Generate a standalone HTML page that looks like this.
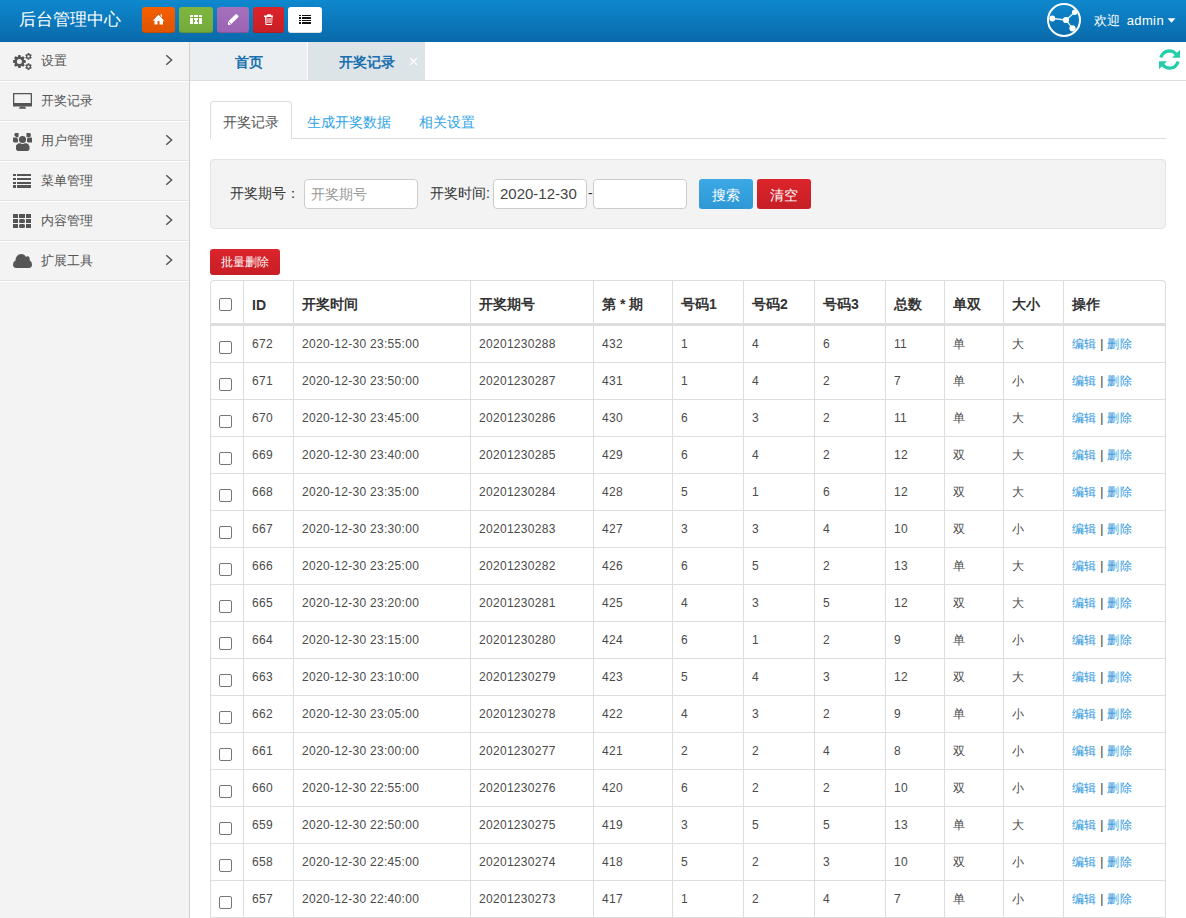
<!DOCTYPE html>
<html><head><meta charset="utf-8">
<style>
*{margin:0;padding:0;box-sizing:border-box}
html,body{width:1186px;height:918px;overflow:hidden;background:#fff;font-family:"Liberation Sans",sans-serif;color:#333}
.abs{position:absolute}
#hdr{left:0;top:0;width:1186px;height:42px;background:linear-gradient(#0e88ce,#0969aa)}
#title{left:19px;top:8px;color:#fff;font-size:17px;line-height:24px;white-space:nowrap}
.hb{top:7px;height:26px;border-radius:3px;box-shadow:inset 0 -1px 0 rgba(0,0,0,.12)}
.hb svg{position:absolute;left:0;top:0}
#side{left:0;top:42px;width:190px;height:876px;background:#f3f3f3;border-right:1px solid #cfcfcf}
.si{position:absolute;left:0;width:189px;height:40px;border-bottom:1px solid #e2e2e2;box-shadow:0 1px 0 #fff}
.si .t{position:absolute;left:41px;top:12px;font-size:13px;line-height:16px;color:#555;white-space:nowrap}
.si .chev{position:absolute;left:164px;top:13px}
.si svg.ic{position:absolute;left:13px}
#tabbar{left:190px;top:42px;width:996px;height:39px;border-bottom:1px solid #dedede;background:#fff}
.tb1{position:absolute;top:0;height:38px;font-size:14px;font-weight:bold;color:#1a6fae;line-height:40px;text-align:center}
#subtabs{left:210px;top:101px;width:956px;height:38px;border-bottom:1px solid #ddd}
.st{position:absolute;top:13px;font-size:14px;line-height:16px;color:#2fa4e7;white-space:nowrap}
#stact{left:0;top:0;width:82px;height:38px;border:1px solid #ddd;border-bottom:none;border-radius:4px 4px 0 0;background:#fff}
#search{left:210px;top:159px;width:956px;height:70px;background:#f3f3f3;border:1px solid #e3e3e3;border-radius:4px}
.lbl{position:absolute;font-size:14px;line-height:16px;color:#333;white-space:nowrap}
.inp{position:absolute;top:179px;height:30px;background:#fff;border:1px solid #ccc;border-radius:4px}
.btn{position:absolute;top:179px;height:30px;border-radius:3px;color:#fff;font-size:14px;line-height:32px;text-align:center}
#tbl{left:210px;top:280px;width:956px;border:1px solid #ddd;border-bottom:none;border-radius:4px 4px 0 0;overflow:hidden}
.tr{display:flex}
.td{border-right:1px solid #ddd;border-bottom:1px solid #ddd;padding-left:8px;white-space:nowrap;display:flex;align-items:center;font-size:12px;letter-spacing:0.3px;color:#4a4a4a;flex:none}
.td.l{border-right:none}
.th .td{border-bottom:3px solid #ddd;font-size:14px;letter-spacing:0;font-weight:bold;color:#333;padding-top:6px}
.td.c0{padding-left:0;justify-content:center}
.cb{display:inline-block;width:13px;height:13px;border:1px solid #767676;border-radius:2px;background:#fff;margin-top:7px;margin-left:-3px}
.th .cb{margin-top:-2px}
.td a{color:#1f96e0}
.td .sep{color:#333}
</style></head>
<body>
<div id="hdr" class="abs"></div>
<div id="title" class="abs">后台管理中心</div>
<div class="abs hb" style="left:142px;width:33px;background:linear-gradient(#f55f00,#e05300)"></div>
<div class="abs hb" style="left:179px;width:34px;background:linear-gradient(#7fb640,#74a93a)"></div>
<div class="abs hb" style="left:217px;width:32px;background:linear-gradient(#a571bd,#9a63b3)"></div>
<div class="abs hb" style="left:253px;width:31px;background:linear-gradient(#dc232a,#c81f26)"></div>
<div class="abs hb" style="left:288px;width:34px;background:#fff"></div>


<svg class="abs" style="left:0;top:0" width="1186" height="42" viewBox="0 0 1186 42">
 <!-- home -->
 <path fill="#fff" d="M152.5,20.5 L158.5,14.2 L160.5,16.2 L160.5,14.5 L162,14.5 L162,17.8 L164.5,20.5 L163,20.5 L163,24.5 L159.5,24.5 L159.5,21 L157.5,21 L157.5,24.5 L154.5,24.5 L154.5,20.5 Z"/>
 <path fill="none" stroke="#c44600" stroke-width="0.8" d="M153,19.8 L158.5,14.2 L164,19.8"/>
 <!-- columns -->
 <g fill="#fff"><rect x="190" y="15" width="3" height="2"/><rect x="194" y="15" width="4" height="2"/><rect x="199" y="15" width="3" height="2"/>
 <rect x="190" y="18" width="3" height="6"/><rect x="199" y="18" width="3" height="6"/>
 <path d="M194,18 h4 v2 h-1 v2 h1 v2 h-4 v-2 h1 v-2 h-1 z"/></g>
 <!-- pencil -->
 <path fill="#fff" d="M228,25 L228,21.8 L235.6,14.2 L236.8,14.2 L238.4,15.8 L238.4,17 L230.8,24.6 L229,25 Z"/>
 <path fill="none" stroke="#7d4a98" stroke-width="0.7" d="M228.6,21.6 L231.2,24.2"/>
 <!-- trash -->
 <path fill="#fff" d="M264,15.5 L266.5,15.5 L267.5,14.3 L270.5,14.3 L271.5,15.5 L273,15.5 L273,17 L272.5,17 L272,25 L265.5,25 L265,17 L264,17 Z"/>
 <g fill="none" stroke="#cd1f26" stroke-width="1"><rect x="267" y="17.5" width="4" height="6"/><path d="M269,17.5 V23.5"/></g>
 <!-- list -->
 <g fill="#111"><rect x="299" y="15" width="2" height="1"/><rect x="302" y="15" width="9" height="1"/>
 <rect x="299" y="17" width="2" height="2"/><rect x="302" y="17" width="9" height="2"/>
 <rect x="299" y="20" width="2" height="1"/><rect x="302" y="20" width="9" height="1"/>
 <rect x="299" y="22" width="2" height="2"/><rect x="302" y="22" width="9" height="2"/></g>
 <!-- share circle -->
 <circle cx="1064" cy="20" r="16" fill="none" stroke="#fff" stroke-width="2"/>
 <g stroke="#e8f2fa" stroke-width="1.3" fill="none"><path d="M1052.3,18.5 L1066,20 L1074.7,12.2 M1066,20 L1072.5,28.3"/></g>
 <g fill="#fff"><circle cx="1052.3" cy="18.5" r="2.9"/><circle cx="1066" cy="20" r="3.1"/><circle cx="1074.7" cy="12.3" r="2.7"/><circle cx="1072.5" cy="28.3" r="3.1"/></g>
 <!-- caret -->
 <path fill="#fff" d="M1167.5,18.2 L1175.5,18.2 L1171.5,22.8 Z"/>
</svg>
<div class="abs" style="left:1094px;top:13px;color:#fff;font-size:13px;line-height:16px;white-space:nowrap;word-spacing:3px">欢迎 <span style="letter-spacing:0.4px">admin</span></div>

<div id="side" class="abs">
  <div class="si" style="top:0;height:39px"><div class="t" style="top:11px">设置</div></div>
  <div class="si" style="top:39px"><div class="t">开奖记录</div></div>
  <div class="si" style="top:79px"><div class="t">用户管理</div></div>
  <div class="si" style="top:119px"><div class="t">菜单管理</div></div>
  <div class="si" style="top:159px"><div class="t">内容管理</div></div>
  <div class="si" style="top:199px"><div class="t">扩展工具</div></div>
</div>


<svg class="abs" style="left:0;top:42px" width="189" height="290" viewBox="0 42 189 290">
 <g fill="#555">
 <!-- gears -->
 <path fill-rule="evenodd" d="M24.18,60.05 L25.80,60.36 L25.80,62.64 L24.18,62.95 L23.81,63.86 L24.73,65.22 L23.12,66.83 L21.76,65.91 L20.85,66.28 L20.54,67.90 L18.26,67.90 L17.95,66.28 L17.04,65.91 L15.68,66.83 L14.07,65.22 L14.99,63.86 L14.62,62.95 L13.00,62.64 L13.00,60.36 L14.62,60.05 L14.99,59.14 L14.07,57.78 L15.68,56.17 L17.04,57.09 L17.95,56.72 L18.26,55.10 L20.54,55.10 L20.85,56.72 L21.76,57.09 L23.12,56.17 L24.73,57.78 L23.81,59.14 Z M16.90,61.50 a2.50,2.50 0 1,0 5.00,0 a2.50,2.50 0 1,0 -5.00,0 Z"/>
 <path fill-rule="evenodd" d="M29.46,58.71 L29.29,59.71 L27.71,59.71 L27.54,58.71 L26.98,58.38 L26.03,58.74 L25.24,57.37 L26.02,56.73 L26.02,56.07 L25.24,55.43 L26.03,54.06 L26.98,54.42 L27.54,54.09 L27.71,53.09 L29.29,53.09 L29.46,54.09 L30.02,54.42 L30.97,54.06 L31.76,55.43 L30.98,56.07 L30.98,56.73 L31.76,57.37 L30.97,58.74 L30.02,58.38 Z M27.30,56.40 a1.20,1.20 0 1,0 2.40,0 a1.20,1.20 0 1,0 -2.40,0 Z"/>
 <path fill-rule="evenodd" d="M29.46,68.91 L29.29,69.91 L27.71,69.91 L27.54,68.91 L26.98,68.58 L26.03,68.94 L25.24,67.57 L26.02,66.93 L26.02,66.27 L25.24,65.63 L26.03,64.26 L26.98,64.62 L27.54,64.29 L27.71,63.29 L29.29,63.29 L29.46,64.29 L30.02,64.62 L30.97,64.26 L31.76,65.63 L30.98,66.27 L30.98,66.93 L31.76,67.57 L30.97,68.94 L30.02,68.58 Z M27.30,66.60 a1.20,1.20 0 1,0 2.40,0 a1.20,1.20 0 1,0 -2.40,0 Z"/>
 <!-- monitor -->
 <path fill-rule="evenodd" d="M13,93.3 Q13,93 13.5,93 H31.5 Q32,93 32,93.5 V106 Q32,106.5 31.5,106.5 H13.5 Q13,106.5 13,106 Z M14.3,94.3 V103 H30.7 V94.3 Z"/>
 <path d="M19.8,106.5 H25.2 L25.5,108 L26.5,108.8 H18.5 L19.5,108 Z"/>
 <!-- users -->
 <circle cx="22.5" cy="139.5" r="3.6"/>
 <path d="M17.5,144 Q18,143 20,143.3 Q22.5,144.5 25,143.3 Q27,143 28.5,144.5 L29.5,146.5 L29.5,149.5 L28,151 H17.5 L16,149.5 V145.5 Z"/>
 <path d="M14.5,133.5 Q14.8,133 15.5,133 H18.5 V137 Q17.5,137.5 16,137 L14.5,135.5 Z"/>
 <path d="M26.5,133 H29.5 Q30.5,133 30.8,134 V136.5 L29.5,137 H26.5 Z"/>
 <path d="M13,138 Q13,137.5 13.5,137.5 H17 L18,139.5 V142 L17,142.5 H14 L13,141.5 Z"/>
 <path d="M27.5,137.5 H31.5 Q32,137.5 32,138 V142.5 H28 L27,141.5 V139.5 Z"/>
 <!-- list -->
 <rect x="13" y="174" width="3" height="2"/><rect x="17" y="174" width="14" height="2"/>
 <rect x="13" y="178" width="3" height="2"/><rect x="17" y="178" width="14" height="2"/>
 <rect x="13" y="182" width="3" height="2"/><rect x="17" y="182" width="14" height="2"/>
 <rect x="13" y="185" width="3" height="3"/><rect x="17" y="185" width="14" height="3"/>
 <!-- th -->
 <rect x="13" y="214" width="5" height="4"/><rect x="19" y="214" width="6" height="4"/><rect x="26" y="214" width="5" height="4"/>
 <rect x="13" y="219" width="5" height="4"/><rect x="19" y="219" width="6" height="4" rx="1.5"/><rect x="26" y="219" width="5" height="4"/>
 <rect x="13" y="224" width="5" height="4"/><rect x="19" y="224" width="6" height="4" rx="1.5"/><rect x="26" y="224" width="5" height="4"/>
 <!-- cloud -->
 <path d="M16.5,268 Q13,268 13,264.5 Q13,261.5 15.5,260.5 Q16,254 21.5,254 Q24.5,254 26,257 Q27,256 28,256.3 Q30,257 29.8,260.5 Q32,261.5 32,264.5 Q32,268 28.5,268 Z"/>
 </g>
 <g fill="none" stroke="#555" stroke-width="1.5">
 <path d="M166.3,55.2 L171.6,60 L166.3,64.8"/>
 <path d="M166.3,135.2 L171.6,140 L166.3,144.8"/>
 <path d="M166.3,175.2 L171.6,180 L166.3,184.8"/>
 <path d="M166.3,215.2 L171.6,220 L166.3,224.8"/>
 <path d="M166.3,255.2 L171.6,260 L166.3,264.8"/>
 </g>
</svg>

<div id="tabbar" class="abs">
  <div class="tb1" style="left:0;width:117px;background:#ebeff1">首页</div>
  <div class="tb1" style="left:118px;width:117px;background:#dde4e8">开奖记录</div>
</div>


<svg class="abs" style="left:409px;top:57px" width="9" height="9" viewBox="0 0 9 9"><path d="M1,1 L8,8 M8,1 L1,8" stroke="#fff" stroke-width="1.2"/></svg>
<svg class="abs" style="left:1159px;top:49px" width="21" height="21" viewBox="0 0 21 21">
 <g fill="none" stroke="#22cfa8" stroke-width="3.2"><path d="M1.8,8.6 Q4,2 10.5,1.8 Q14.5,1.8 17.5,5.5"/><path d="M19.2,12.4 Q17,19 10.5,19.2 Q6.5,19.2 3.5,15.5"/></g>
 <g fill="#22cfa8"><path d="M21,0.8 V8.8 H13 Z"/><path d="M0,20.2 V12.2 H8 Z"/></g>
</svg>

<div id="subtabs" class="abs">
  <div id="stact" class="abs"></div>
  <div class="st" style="left:13px;color:#555">开奖记录</div>
  <div class="st" style="left:97px">生成开奖数据</div>
  <div class="st" style="left:209px">相关设置</div>
</div>

<div id="search" class="abs"></div>
<div class="lbl" style="left:230px;top:185px">开奖期号：</div>
<div class="inp" style="left:304px;width:114px"></div>
<div class="lbl" style="left:311px;top:186px;color:#999">开奖期号</div>
<div class="lbl" style="left:430px;top:185px">开奖时间:</div>
<div class="inp" style="left:493px;width:94px"></div>
<div class="lbl" style="left:500px;top:186px;font-size:15px;color:#444">2020-12-30</div>
<div class="lbl" style="left:588px;top:185px">-</div>
<div class="inp" style="left:593px;width:94px"></div>
<div class="btn" style="left:699px;width:54px;background:linear-gradient(#3ca8e6,#2d98d5)">搜索</div>
<div class="btn" style="left:757px;width:54px;background:linear-gradient(#dc242b,#c71e25)">清空</div>

<div class="btn" style="left:210px;top:249px;width:70px;height:26px;line-height:26px;font-size:12px;background:linear-gradient(#dc242b,#c71e25)">批量删除</div>

<div id="tbl" class="abs">
<div class="tr th" style="height:45px"><div class="td c0" style="width:33px"><span class="cb"></span></div><div class="td c1" style="width:50px">ID</div><div class="td c2" style="width:177px">开奖时间</div><div class="td c3" style="width:123px">开奖期号</div><div class="td c4" style="width:79px">第 * 期</div><div class="td c5" style="width:71px">号码1</div><div class="td c6" style="width:71px">号码2</div><div class="td c7" style="width:71px">号码3</div><div class="td c8" style="width:59px">总数</div><div class="td c9" style="width:59px">单双</div><div class="td c10" style="width:60px">大小</div><div class="td c11 l" style="width:101px">操作</div></div>
<div class="tr tb" style="height:37px"><div class="td c0" style="width:33px"><span class="cb"></span></div><div class="td c1" style="width:50px">672</div><div class="td c2" style="width:177px">2020-12-30 23:55:00</div><div class="td c3" style="width:123px">20201230288</div><div class="td c4" style="width:79px">432</div><div class="td c5" style="width:71px">1</div><div class="td c6" style="width:71px">4</div><div class="td c7" style="width:71px">6</div><div class="td c8" style="width:59px">11</div><div class="td c9" style="width:59px">单</div><div class="td c10" style="width:60px">大</div><div class="td c11 l" style="width:101px"><span><a>编辑</a> <span class="sep">|</span> <a>删除</a></span></div></div>
<div class="tr tb" style="height:37px"><div class="td c0" style="width:33px"><span class="cb"></span></div><div class="td c1" style="width:50px">671</div><div class="td c2" style="width:177px">2020-12-30 23:50:00</div><div class="td c3" style="width:123px">20201230287</div><div class="td c4" style="width:79px">431</div><div class="td c5" style="width:71px">1</div><div class="td c6" style="width:71px">4</div><div class="td c7" style="width:71px">2</div><div class="td c8" style="width:59px">7</div><div class="td c9" style="width:59px">单</div><div class="td c10" style="width:60px">小</div><div class="td c11 l" style="width:101px"><span><a>编辑</a> <span class="sep">|</span> <a>删除</a></span></div></div>
<div class="tr tb" style="height:37px"><div class="td c0" style="width:33px"><span class="cb"></span></div><div class="td c1" style="width:50px">670</div><div class="td c2" style="width:177px">2020-12-30 23:45:00</div><div class="td c3" style="width:123px">20201230286</div><div class="td c4" style="width:79px">430</div><div class="td c5" style="width:71px">6</div><div class="td c6" style="width:71px">3</div><div class="td c7" style="width:71px">2</div><div class="td c8" style="width:59px">11</div><div class="td c9" style="width:59px">单</div><div class="td c10" style="width:60px">大</div><div class="td c11 l" style="width:101px"><span><a>编辑</a> <span class="sep">|</span> <a>删除</a></span></div></div>
<div class="tr tb" style="height:37px"><div class="td c0" style="width:33px"><span class="cb"></span></div><div class="td c1" style="width:50px">669</div><div class="td c2" style="width:177px">2020-12-30 23:40:00</div><div class="td c3" style="width:123px">20201230285</div><div class="td c4" style="width:79px">429</div><div class="td c5" style="width:71px">6</div><div class="td c6" style="width:71px">4</div><div class="td c7" style="width:71px">2</div><div class="td c8" style="width:59px">12</div><div class="td c9" style="width:59px">双</div><div class="td c10" style="width:60px">大</div><div class="td c11 l" style="width:101px"><span><a>编辑</a> <span class="sep">|</span> <a>删除</a></span></div></div>
<div class="tr tb" style="height:37px"><div class="td c0" style="width:33px"><span class="cb"></span></div><div class="td c1" style="width:50px">668</div><div class="td c2" style="width:177px">2020-12-30 23:35:00</div><div class="td c3" style="width:123px">20201230284</div><div class="td c4" style="width:79px">428</div><div class="td c5" style="width:71px">5</div><div class="td c6" style="width:71px">1</div><div class="td c7" style="width:71px">6</div><div class="td c8" style="width:59px">12</div><div class="td c9" style="width:59px">双</div><div class="td c10" style="width:60px">大</div><div class="td c11 l" style="width:101px"><span><a>编辑</a> <span class="sep">|</span> <a>删除</a></span></div></div>
<div class="tr tb" style="height:37px"><div class="td c0" style="width:33px"><span class="cb"></span></div><div class="td c1" style="width:50px">667</div><div class="td c2" style="width:177px">2020-12-30 23:30:00</div><div class="td c3" style="width:123px">20201230283</div><div class="td c4" style="width:79px">427</div><div class="td c5" style="width:71px">3</div><div class="td c6" style="width:71px">3</div><div class="td c7" style="width:71px">4</div><div class="td c8" style="width:59px">10</div><div class="td c9" style="width:59px">双</div><div class="td c10" style="width:60px">小</div><div class="td c11 l" style="width:101px"><span><a>编辑</a> <span class="sep">|</span> <a>删除</a></span></div></div>
<div class="tr tb" style="height:37px"><div class="td c0" style="width:33px"><span class="cb"></span></div><div class="td c1" style="width:50px">666</div><div class="td c2" style="width:177px">2020-12-30 23:25:00</div><div class="td c3" style="width:123px">20201230282</div><div class="td c4" style="width:79px">426</div><div class="td c5" style="width:71px">6</div><div class="td c6" style="width:71px">5</div><div class="td c7" style="width:71px">2</div><div class="td c8" style="width:59px">13</div><div class="td c9" style="width:59px">单</div><div class="td c10" style="width:60px">大</div><div class="td c11 l" style="width:101px"><span><a>编辑</a> <span class="sep">|</span> <a>删除</a></span></div></div>
<div class="tr tb" style="height:37px"><div class="td c0" style="width:33px"><span class="cb"></span></div><div class="td c1" style="width:50px">665</div><div class="td c2" style="width:177px">2020-12-30 23:20:00</div><div class="td c3" style="width:123px">20201230281</div><div class="td c4" style="width:79px">425</div><div class="td c5" style="width:71px">4</div><div class="td c6" style="width:71px">3</div><div class="td c7" style="width:71px">5</div><div class="td c8" style="width:59px">12</div><div class="td c9" style="width:59px">双</div><div class="td c10" style="width:60px">大</div><div class="td c11 l" style="width:101px"><span><a>编辑</a> <span class="sep">|</span> <a>删除</a></span></div></div>
<div class="tr tb" style="height:37px"><div class="td c0" style="width:33px"><span class="cb"></span></div><div class="td c1" style="width:50px">664</div><div class="td c2" style="width:177px">2020-12-30 23:15:00</div><div class="td c3" style="width:123px">20201230280</div><div class="td c4" style="width:79px">424</div><div class="td c5" style="width:71px">6</div><div class="td c6" style="width:71px">1</div><div class="td c7" style="width:71px">2</div><div class="td c8" style="width:59px">9</div><div class="td c9" style="width:59px">单</div><div class="td c10" style="width:60px">小</div><div class="td c11 l" style="width:101px"><span><a>编辑</a> <span class="sep">|</span> <a>删除</a></span></div></div>
<div class="tr tb" style="height:37px"><div class="td c0" style="width:33px"><span class="cb"></span></div><div class="td c1" style="width:50px">663</div><div class="td c2" style="width:177px">2020-12-30 23:10:00</div><div class="td c3" style="width:123px">20201230279</div><div class="td c4" style="width:79px">423</div><div class="td c5" style="width:71px">5</div><div class="td c6" style="width:71px">4</div><div class="td c7" style="width:71px">3</div><div class="td c8" style="width:59px">12</div><div class="td c9" style="width:59px">双</div><div class="td c10" style="width:60px">大</div><div class="td c11 l" style="width:101px"><span><a>编辑</a> <span class="sep">|</span> <a>删除</a></span></div></div>
<div class="tr tb" style="height:37px"><div class="td c0" style="width:33px"><span class="cb"></span></div><div class="td c1" style="width:50px">662</div><div class="td c2" style="width:177px">2020-12-30 23:05:00</div><div class="td c3" style="width:123px">20201230278</div><div class="td c4" style="width:79px">422</div><div class="td c5" style="width:71px">4</div><div class="td c6" style="width:71px">3</div><div class="td c7" style="width:71px">2</div><div class="td c8" style="width:59px">9</div><div class="td c9" style="width:59px">单</div><div class="td c10" style="width:60px">小</div><div class="td c11 l" style="width:101px"><span><a>编辑</a> <span class="sep">|</span> <a>删除</a></span></div></div>
<div class="tr tb" style="height:37px"><div class="td c0" style="width:33px"><span class="cb"></span></div><div class="td c1" style="width:50px">661</div><div class="td c2" style="width:177px">2020-12-30 23:00:00</div><div class="td c3" style="width:123px">20201230277</div><div class="td c4" style="width:79px">421</div><div class="td c5" style="width:71px">2</div><div class="td c6" style="width:71px">2</div><div class="td c7" style="width:71px">4</div><div class="td c8" style="width:59px">8</div><div class="td c9" style="width:59px">双</div><div class="td c10" style="width:60px">小</div><div class="td c11 l" style="width:101px"><span><a>编辑</a> <span class="sep">|</span> <a>删除</a></span></div></div>
<div class="tr tb" style="height:37px"><div class="td c0" style="width:33px"><span class="cb"></span></div><div class="td c1" style="width:50px">660</div><div class="td c2" style="width:177px">2020-12-30 22:55:00</div><div class="td c3" style="width:123px">20201230276</div><div class="td c4" style="width:79px">420</div><div class="td c5" style="width:71px">6</div><div class="td c6" style="width:71px">2</div><div class="td c7" style="width:71px">2</div><div class="td c8" style="width:59px">10</div><div class="td c9" style="width:59px">双</div><div class="td c10" style="width:60px">小</div><div class="td c11 l" style="width:101px"><span><a>编辑</a> <span class="sep">|</span> <a>删除</a></span></div></div>
<div class="tr tb" style="height:37px"><div class="td c0" style="width:33px"><span class="cb"></span></div><div class="td c1" style="width:50px">659</div><div class="td c2" style="width:177px">2020-12-30 22:50:00</div><div class="td c3" style="width:123px">20201230275</div><div class="td c4" style="width:79px">419</div><div class="td c5" style="width:71px">3</div><div class="td c6" style="width:71px">5</div><div class="td c7" style="width:71px">5</div><div class="td c8" style="width:59px">13</div><div class="td c9" style="width:59px">单</div><div class="td c10" style="width:60px">大</div><div class="td c11 l" style="width:101px"><span><a>编辑</a> <span class="sep">|</span> <a>删除</a></span></div></div>
<div class="tr tb" style="height:37px"><div class="td c0" style="width:33px"><span class="cb"></span></div><div class="td c1" style="width:50px">658</div><div class="td c2" style="width:177px">2020-12-30 22:45:00</div><div class="td c3" style="width:123px">20201230274</div><div class="td c4" style="width:79px">418</div><div class="td c5" style="width:71px">5</div><div class="td c6" style="width:71px">2</div><div class="td c7" style="width:71px">3</div><div class="td c8" style="width:59px">10</div><div class="td c9" style="width:59px">双</div><div class="td c10" style="width:60px">小</div><div class="td c11 l" style="width:101px"><span><a>编辑</a> <span class="sep">|</span> <a>删除</a></span></div></div>
<div class="tr tb" style="height:37px"><div class="td c0" style="width:33px"><span class="cb"></span></div><div class="td c1" style="width:50px">657</div><div class="td c2" style="width:177px">2020-12-30 22:40:00</div><div class="td c3" style="width:123px">20201230273</div><div class="td c4" style="width:79px">417</div><div class="td c5" style="width:71px">1</div><div class="td c6" style="width:71px">2</div><div class="td c7" style="width:71px">4</div><div class="td c8" style="width:59px">7</div><div class="td c9" style="width:59px">单</div><div class="td c10" style="width:60px">小</div><div class="td c11 l" style="width:101px"><span><a>编辑</a> <span class="sep">|</span> <a>删除</a></span></div></div>
</div>

</body></html>
